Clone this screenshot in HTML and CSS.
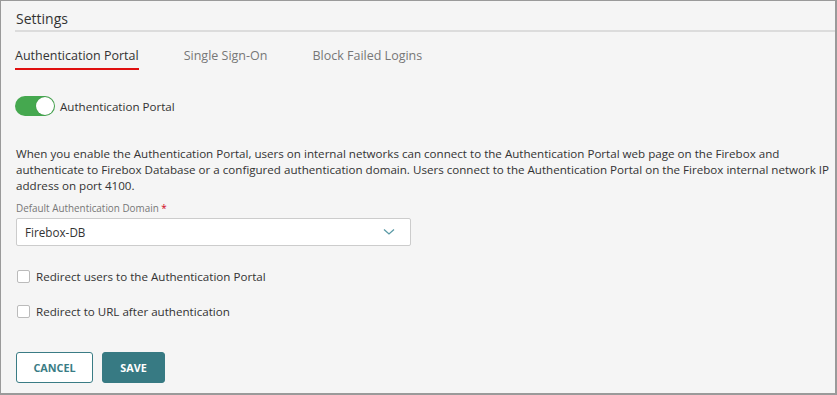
FILE: index.html
```html
<!DOCTYPE html>
<html>
<head>
<meta charset="utf-8">
<link rel="stylesheet" href="styles.css">
</head>
<body>
<div class="frame">
  <div class="header"><h1 class="title">Settings</h1></div>
  <nav class="tabs">
    <span class="tab active">Authentication Portal</span>
    <span class="tab">Single Sign-On</span>
    <span class="tab">Block Failed Logins</span>
  </nav>
  <div class="toggle-row">
    <span class="switch"><span class="knob"></span></span>
    <span class="toggle-label">Authentication Portal</span>
  </div>
  <p class="desc">When you enable the Authentication Portal, users on internal networks can connect to the Authentication Portal web page on the Firebox and authenticate to Firebox Database or a configured authentication domain. Users connect to the Authentication Portal on the Firebox internal network IP address on port 4100.</p>
  <label class="field-label">Default Authentication Domain <span class="req">*</span></label>
  <div class="select">
    <span>Firebox-DB</span>
    <svg class="chev" width="12" height="8" viewBox="0 0 12 8"><path d="M1 1.5 L6 6 L11 1.5" fill="none" stroke="#5a9aa6" stroke-width="1.3"/></svg>
  </div>
  <div class="check-row first"><span class="box"></span><span>Redirect users to the Authentication Portal</span></div>
  <div class="check-row"><span class="box"></span><span>Redirect to URL after authentication</span></div>
  <div class="actions">
    <button class="btn cancel">CANCEL</button>
    <button class="btn save">SAVE</button>
  </div>
</div>
</body>
</html>
```
FILE: styles.css
```css
html, body { margin: 0; padding: 0; }
body { font-family: "Open Sans", "Liberation Sans", sans-serif; color: #333; background: #f5f5f5; }
.frame {
  width: 837px; height: 395px; box-sizing: border-box;
  border: 1px solid #9a9a9a; border-right-width: 2px; border-bottom-width: 2px;
  background: #f5f5f5; padding: 0 0 0 14px; overflow: hidden;
}
.header { border-bottom: 2px solid #dcdcdc; padding-top: 8px; height: 21px; }
.title { margin: 0; font-size: 14px; font-weight: 400; line-height: 20px; color: #333; padding-left: 1px; }
.tabs { display: flex; gap: 45px; margin-top: 15px; }
.tab { font-size: 12.5px; line-height: 18px; color: #777; padding-bottom: 3px; }
.tab.active { color: #333; border-bottom: 2px solid #e01010; }
.toggle-row { display: flex; align-items: center; gap: 5px; margin-top: 26px; }
.switch { width: 40px; height: 20px; border-radius: 10px; background: #45a84f; position: relative; display: inline-block; }
.knob { position: absolute; right: 1px; top: 1px; width: 18px; height: 18px; border-radius: 50%; background: #fff; box-shadow: 0 0 1px rgba(0,0,0,.3); }
.toggle-label { font-size: 11.6px; color: #333; }
.desc { font-size: 11.6px; line-height: 16px; margin: 30px 0 0 1px; width: 822px; color: #333; }
.field-label { display: block; font-size: 9.9px; color: #777; margin: 7px 0 0 1px; line-height: 14px; }
.req { color: #d0021b; }
.select {
  margin: 3px 0 0 1px; width: 395px; height: 28px; box-sizing: border-box;
  background: #fff; border: 1px solid #ccc; border-radius: 2px;
  display: flex; align-items: center; justify-content: space-between; padding: 0 15px 0 8px;
  font-size: 11.7px; color: #333;
}
.check-row { display: flex; align-items: center; gap: 6px; font-size: 11.6px; color: #333; margin: 0 0 0 2px; }
.check-row.first { margin-top: 23px; }
.check-row + .check-row { margin-top: 20px; }
.box { width: 11px; height: 11px; border: 1px solid #bbb; border-radius: 2px; background: #fff; display: inline-block; }
.actions { display: flex; gap: 9px; margin-top: 33px; margin-left: 1px; }
.btn { font-family: "Open Sans", sans-serif; font-weight: 700; font-size: 10.8px; height: 31px; border-radius: 3px; box-sizing: border-box; cursor: pointer; }
.cancel { width: 77px; background: #fff; color: #3a7c85; border: 1px solid #3a7c85; }
.save { width: 63px; background: #377a83; color: #fff; border: 1px solid #377a83; }
```
